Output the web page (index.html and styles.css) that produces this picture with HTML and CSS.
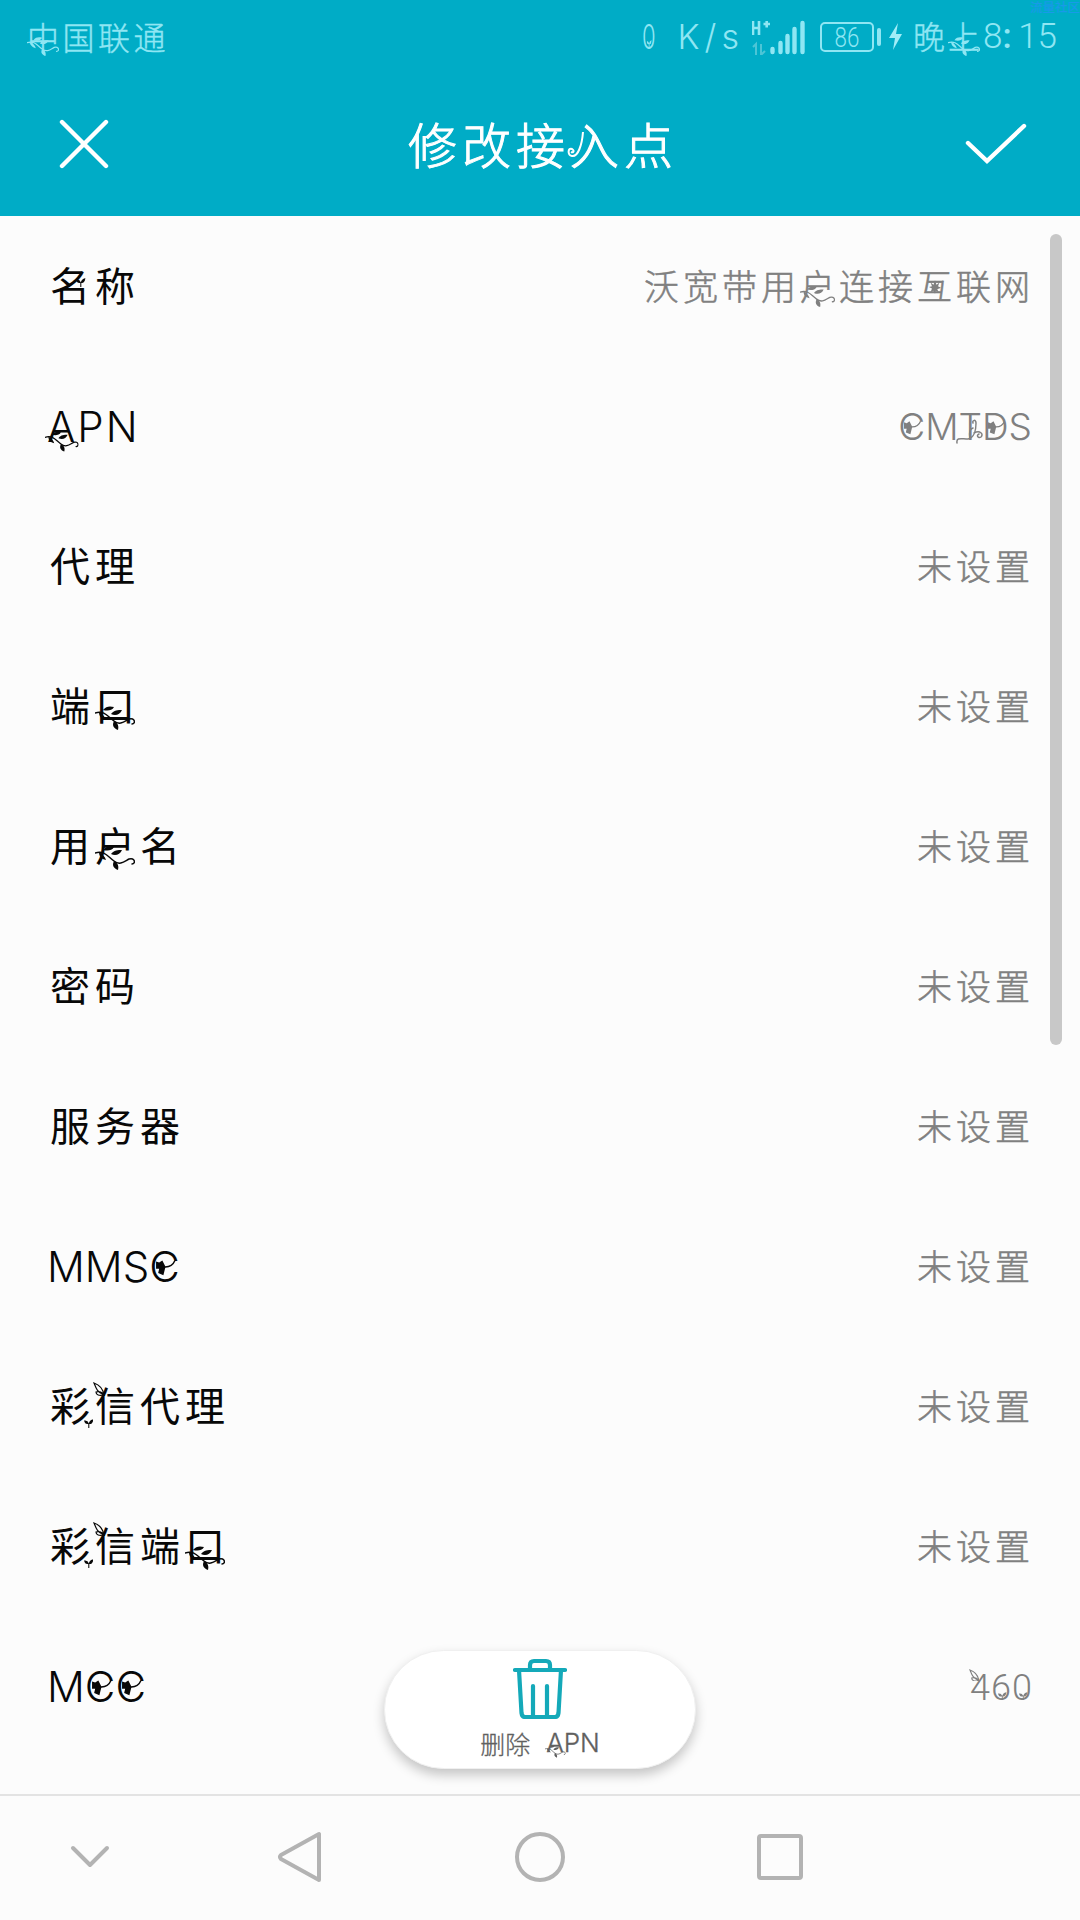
FILE: index.html
```html
<!DOCTYPE html>
<html lang="zh-CN">
<head>
    <meta charset="UTF-8">
    <meta name="viewport" content="width=device-width, initial-scale=1.0">
    <title>修改接入点</title>
    <link rel="stylesheet" href="styles.css">
</head>
<body>
    <!-- plant ornaments shared by the texts -->
    <svg class="defs" width="0" height="0">
        <symbol id="sprig" viewBox="0 0 40 24">
            <path d="M0 7C10 4 13 11 19 15C25 20 30 15 34 13C40 11 41 18 37 18" fill="none" stroke="currentColor" stroke-width="1.500" stroke-linecap="round"/>
            <path d="M8 4C11 0 15 0 19 1C17 5 12 5 8 4ZM16 8C19 4 23 4 27 4C25 9 20 10 16 8ZM4 6C8 8 10 11 11 14C6 13 4 10 4 6ZM19 15C23 17 24 20 23 24C18 22 17 19 19 15Z" fill="currentColor"/>
        </symbol>
        <symbol id="ginkgo" viewBox="0 0 20 16">
            <path d="M8 7Q16 8 19 1" fill="none" stroke="currentColor" stroke-width="1.4"/>
            <path d="M10 7L7 1L4 3L1 2V9L4 9L3 13L8 15Z" fill="currentColor"/>
        </symbol>
        <symbol id="maple" viewBox="0 0 16 18">
            <path d="M8 0L10 6L14 3L12 8L16 10L11 12L13 16L9 14L8 18L6 14L2 16L4 11L0 9L4 8L2 3L6 6Z" fill="currentColor"/>
        </symbol>
        <symbol id="bud" viewBox="0 0 12 12">
            <path d="M6 12V5" stroke="currentColor" stroke-width="1.3"/>
            <path d="M6 6C5 2 2 2 0 2C1 6 3 7 6 6ZM6 6C7 1 10 1 12 0C11 5 9 7 6 6Z" fill="currentColor"/>
        </symbol>
        <symbol id="vine" viewBox="0 0 30 30">
            <path d="M1 29C0 23 5 25 12 25C18 24 20 16 20 9C20 5 16 6 17 9M18 19C24 16 28 20 25 23C22 25 20 21 23 20M14 24C13 19 14 15 17 14" fill="none" stroke="currentColor" stroke-width="1.500" stroke-linecap="round"/>
        </symbol>
        <symbol id="leaf" viewBox="0 0 12 14">
            <path d="M11 13C4 10 3 6 1 1C7 3 10 7 11 13ZM11 13C6 14 3 13 3 10C6 9 9 10 11 13Z" fill="none" stroke="currentColor" stroke-width="1.200"/>
        </symbol>
    </svg>

    <header class="top">
        <div class="status">
            <span class="carrier"><span class="deco">中<svg class="sprig"><use href="#sprig"/></svg></span>国联通</span>
            <span class="speed"><span class="deco zero">0<svg class="bud"><use href="#bud"/></svg></span><span>K/s</span></span>
            <svg class="signal" width="56" height="36" viewBox="0 0 56 36">
                <path d="M1 2V16M7 2V16M1 9H7M11.500 5H18M14.700 2V8.500" stroke="#8fe6f3" stroke-width="2.600" fill="none"/>
                <path d="M4 36V25L1 28M9 25V36L13 32" stroke="#4cc5d6" stroke-width="2" fill="none"/>
                <path d="M20.500 30V33M28.500 24V33M35.500 17V33M42.500 10V33M50.500 4V33" stroke="#8fe6f3" stroke-width="4.400" stroke-linecap="round"/>
            </svg>
            <span class="battery"><span class="level"><span>86</span></span><span class="nub"></span></span>
            <svg class="bolt" width="14" height="28" viewBox="0 0 14 28"><path d="M9 0L0 15H6L4 27L13 11H7Z" fill="#a0edf7"/></svg>
            <span class="clock"><span class="evening">晚<span class="deco">上<svg class="sprig"><use href="#sprig"/></svg></span></span><span class="hour">8<b>:</b></span><span class="minute">15</span></span>
            <span class="mark">流量社区</span>
        </div>
        <div class="bar">
            <svg width="50" height="50" viewBox="0 0 50 50"><path d="M3 3L47 47M47 3L3 47" stroke="#fff" stroke-width="4.400" stroke-linecap="round"/></svg>
            <h1>修改接<span class="deco">入<svg class="curl" viewBox="0 0 18 28"><path d="M16 1C15 14 11 26 5 25C0 24 1 16 5 18C8 20 6 22 4 21" fill="none" stroke="currentColor" stroke-width="2"/></svg></span>点</h1>
            <svg width="62" height="42" viewBox="0 0 62 42"><path d="M3 20L22 38L59 3" fill="none" stroke="#fff" stroke-width="4.400" stroke-linecap="round"/></svg>
        </div>
    </header>

    <main class="list">
        <div class="row"><span class="name"><span class="deco">名<svg class="bud side"><use href="#bud"/></svg></span>称</span><span class="value">沃宽带用<span class="deco">户<svg class="sprig"><use href="#sprig"/></svg></span>连接<span class="deco">互<svg class="maple"><use href="#maple"/></svg></span>联网</span></div>
        <div class="row"><span class="name latin apn"><span class="deco">A<svg class="sprig"><use href="#sprig"/></svg></span>PN</span><span class="value latin"><span class="deco">C<svg class="ginkgo"><use href="#ginkgo"/></svg></span>M<span class="deco">T<svg class="vine"><use href="#vine"/></svg></span><span class="deco">D<svg class="ginkgo"><use href="#ginkgo"/></svg></span>S</span></div>
        <div class="row"><span class="name">代理</span><span class="value">未设置</span></div>
        <div class="row"><span class="name">端<span class="deco">口<svg class="sprig"><use href="#sprig"/></svg></span></span><span class="value">未设置</span></div>
        <div class="row"><span class="name">用<span class="deco">户<svg class="sprig"><use href="#sprig"/></svg></span>名</span><span class="value">未设置</span></div>
        <div class="row"><span class="name">密码</span><span class="value">未设置</span></div>
        <div class="row"><span class="name">服务器</span><span class="value">未设置</span></div>
        <div class="row"><span class="name latin">MMS<span class="deco">C<svg class="ginkgo"><use href="#ginkgo"/></svg></span></span><span class="value">未设置</span></div>
        <div class="row"><span class="name"><span class="deco">彩<svg class="bud low"><use href="#bud"/></svg></span><span class="deco">信<svg class="leaf"><use href="#leaf"/></svg></span>代理</span><span class="value">未设置</span></div>
        <div class="row"><span class="name"><span class="deco">彩<svg class="bud low"><use href="#bud"/></svg></span><span class="deco">信<svg class="leaf"><use href="#leaf"/></svg></span>端<span class="deco">口<svg class="sprig"><use href="#sprig"/></svg></span></span><span class="value">未设置</span></div>
        <div class="row"><span class="name latin">M<span class="deco">C<svg class="ginkgo"><use href="#ginkgo"/></svg></span><span class="deco">C<svg class="ginkgo"><use href="#ginkgo"/></svg></span></span><span class="value number"><span class="deco">4<svg class="leaf"><use href="#leaf"/></svg></span><span class="deco">6<svg class="bud"><use href="#bud"/></svg></span><span class="deco">0<svg class="bud"><use href="#bud"/></svg></span></span></div>
        <div class="scrollbar"></div>
        <button class="delete">
            <svg width="54" height="61" viewBox="0 0 54 61" fill="none" stroke="#14a9b9" stroke-width="4.200" stroke-linecap="round" stroke-linejoin="round">
                <path d="M2 12H52M17 11V7Q17 3 21 3H33Q37 3 37 7V11M6 12L8.500 55Q9 59 12 59H42Q45 59 45.500 55L48 12M20 28V58M34 28V58"/>
            </svg>
            <span class="caption"><span>删除</span><span class="caption-latin"><span class="deco">A<svg class="sprig"><use href="#sprig"/></svg></span>PN</span></span>
        </button>
    </main>

    <nav class="nav">
        <svg width="1080" height="124" viewBox="0 0 1080 124" fill="none" stroke="#b3b3b3" stroke-width="4" stroke-linecap="round" stroke-linejoin="round">
            <path d="M73 52L90 69L107 52"/>
            <path d="M319 38V84L281 63Q279 61 281 59Z"/>
            <circle cx="540" cy="61" r="23"/>
            <rect x="759" y="40" width="42" height="42" rx="2"/>
        </svg>
    </nav>
</body>
</html>
```

FILE: styles.css
```css
* {
    box-sizing: border-box;
}
body {
    margin: 0;
    width: 1080px;
    height: 1920px;
    overflow: hidden;
    display: flex;
    flex-direction: column;
    background: #fcfcfc;
    font-family: "Noto Sans CJK SC", sans-serif;
    font-weight: 300;
    color: #080808;
}
svg {
    display: block;
    flex: none;
}
.defs {
    position: absolute;
}

/* Ornaments lie over the letter they belong to */
.deco {
    position: relative;
    display: inline-block;
    line-height: 1.2;
}
.deco svg {
    position: absolute;
}
.deco .sprig {
    width: 1em;
    height: 0.6em;
    left: 0;
    bottom: -0.05em;
}
.latin .deco .sprig, .caption-latin .deco .sprig {
    width: 0.8em;
    height: 0.5em;
    left: -0.05em;
    bottom: 0;
}
.deco .ginkgo {
    width: 0.5em;
    height: 0.42em;
    left: 0.14em;
    top: 50%;
    margin-top: -0.19em;
}
.deco .maple {
    width: 12px;
    height: 16px;
    left: 12px;
    top: 15px;
}
.deco .bud {
    width: 0.24em;
    height: 0.24em;
    left: 0.2em;
    top: 58%;
}
.deco .vine {
    width: 30px;
    height: 30px;
    left: -2px;
    top: 9px;
}
.deco .leaf {
    width: 0.3em;
    height: 0.35em;
    left: -0.04em;
    top: 0.06em;
}
.deco .bud.low {
    left: 0.84em;
    top: 0.98em;
}
.deco .bud.side {
    left: 0.65em;
    top: 0.45em;
}

/* Header */
.top {
    height: 216px;
    flex: none;
    background: #00acc6;
    color: #fff;
}
.status {
    position: relative;
    height: 74px;
    padding: 0 23px 0 27px;
    display: flex;
    align-items: center;
    color: #8fe6f3;
    font-size: 32px;
    line-height: 74px;
    white-space: nowrap;
}
.carrier {
    margin-top: -3px;
    letter-spacing: 3.500px;
    margin-right: auto;
    -webkit-text-stroke: 0.4px;
}
.speed {
    width: 102px;
    display: flex;
    align-items: center;
    justify-content: space-between;
    font-family: "Inter", sans-serif;
    font-size: 34px;
    letter-spacing: 5px;
    margin-right: 7px;
}
.zero {
    width: 22px;
    transform: scaleX(0.65);
    transform-origin: left;
}
.zero .bud {
    left: 7px;
}
.signal {
    margin-left: 1px;
}
.battery {
    display: flex;
    align-items: center;
    margin-left: 12px;
}
.level {
    width: 54px;
    height: 30px;
    border: 2px solid #8fe6f3;
    border-radius: 5px;
    font: 300 28px/27px "Roboto", sans-serif;
    text-align: center;
}
.level span {
    display: block;
    transform: scaleX(0.8);
}
.nub {
    width: 4px;
    height: 18px;
    margin-left: 3px;
    border-radius: 2px;
    background: #8fe6f3;
}
.bolt {
    margin: 0 10px 0 8px;
}
.clock {
    width: 144px;
    display: flex;
    letter-spacing: 3px;
}
.evening {
    margin-top: -2px;
    -webkit-text-stroke: 0.4px;
}
.hour, .minute {
    font-family: "Roboto", sans-serif;
    font-size: 35px;
    letter-spacing: 0;
}
.hour b {
    font-weight: 500;
}
.minute {
    flex: 1;
    text-align: right;
}
.mark {
    position: absolute;
    top: 0;
    right: 0;
    font-size: 12.500px;
    font-weight: 500;
    line-height: 13px;
    color: #189ae8;
}
.bar {
    height: 142px;
    padding: 0 53px 2px 59px;
    display: flex;
    align-items: center;
    justify-content: space-between;
}
h1 {
    margin: -3px 0 0 12px;
    font-size: 49px;
    font-weight: 300;
    letter-spacing: 5px;
    line-height: 72px;
    -webkit-text-stroke: 1px;
}
.deco .curl {
    width: 18px;
    height: 28px;
    left: -3px;
    top: 17px;
}

/* Settings */
.list {
    position: relative;
    flex: 1;
    padding-top: 1px;
    min-height: 0;
}
.row {
    height: 140px;
    padding: 0 46px 0 50px;
    display: flex;
    align-items: center;
    justify-content: space-between;
    line-height: 60px;
    white-space: nowrap;
}
.name {
    margin-top: -7px;
    font-size: 40px;
    font-weight: 400;
    letter-spacing: 5px;
}
.value {
    margin-top: -5px;
    font-size: 35px;
    letter-spacing: 4px;
    color: #808080;
    -webkit-text-stroke: 0.5px;
}
.latin {
    margin-top: 0;
    font-family: "Inter", sans-serif;
    font-weight: 300;
    letter-spacing: 0;
}
.name.latin {
    font-size: 42px;
    margin-left: -3px;
}
.name.apn {
    letter-spacing: 2px;
}
.value.latin {
    font-size: 37px;
    margin-right: 2px;
    -webkit-text-stroke: 0;
}
.number {
    margin-top: 1px;
    font-family: "Roboto", sans-serif;
    font-size: 36px;
    font-weight: 300;
    letter-spacing: 1px;
    margin-right: 1px;
    -webkit-text-stroke: 0;
}
.scrollbar {
    position: absolute;
    top: 18px;
    right: 18px;
    width: 12px;
    height: 811px;
    border-radius: 6px;
    background: #c8c8c8;
}
.delete {
    position: absolute;
    left: 384px;
    top: 1434px;
    width: 312px;
    height: 119px;
    padding: 7px 0 0;
    border: 1px solid #f0f0f0;
    border-radius: 60px;
    background: #fff;
    box-shadow: 0 6px 12px rgba(0, 0, 0, 0.22);
    display: flex;
    flex-direction: column;
    align-items: center;
    font-family: inherit;
    font-weight: 300;
    color: #606060;
}
.caption {
    display: flex;
    align-items: center;
    gap: 16px;
    font-size: 25px;
    line-height: 48px;
    -webkit-text-stroke: 0.3px;
}
.caption-latin {
    font-family: "Inter", sans-serif;
    font-size: 26px;
}

/* Navigation keys */
.nav {
    height: 126px;
    flex: none;
    border-top: 2px solid #e3e3e3;
}
```
